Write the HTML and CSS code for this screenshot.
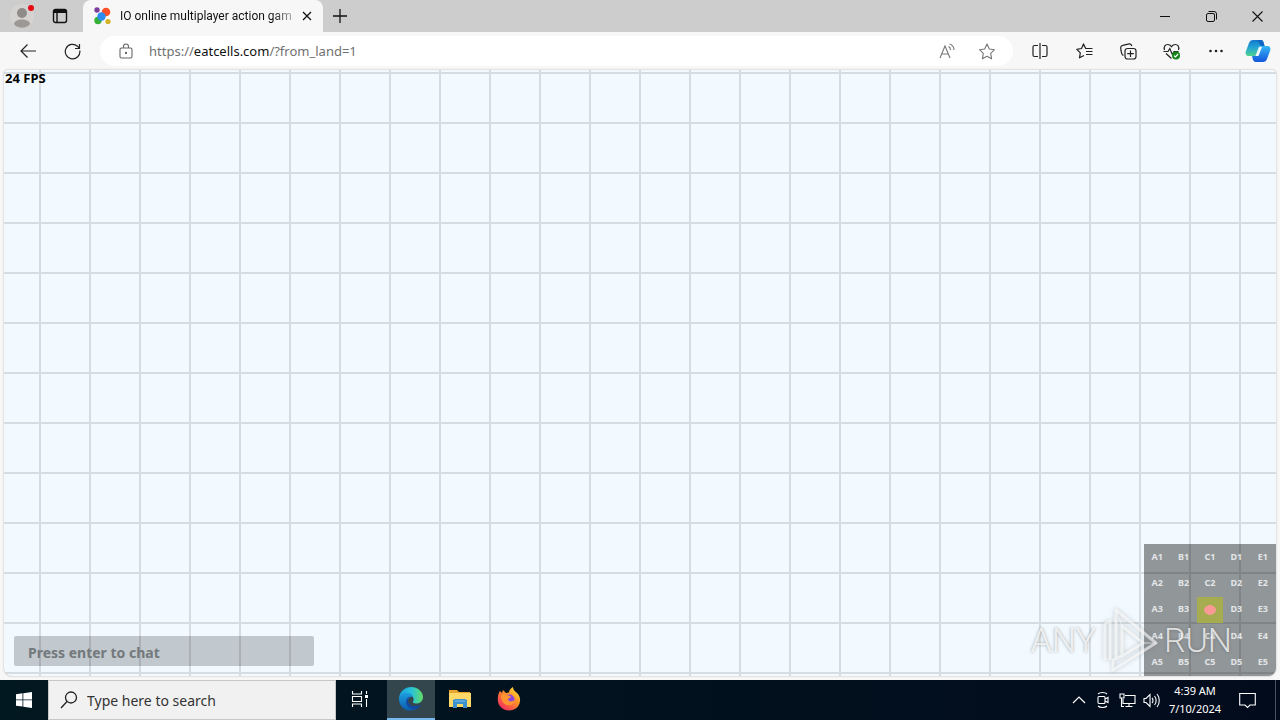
FILE: index.html
```html
<!DOCTYPE html>
<html lang="en">
<head>
<meta charset="utf-8">
<title>IO online multiplayer action game</title>
<link rel="stylesheet" href="styles.css">
</head>
<body>
<header class="tabbar">
  <button class="icon-btn profile" aria-label="Profile"><svg width="28" height="28" viewBox="0 0 28 28"><circle cx="14" cy="14" r="12" fill="#d5d3d2"/><circle cx="14" cy="11" r="5" fill="#8f8b89"/><path d="M6 22c0-6 16-6 16 0-3 5-13 5-16 0z" fill="#9c9896"/><circle cx="23" cy="6" r="3" fill="#e60b12"/></svg></button>
  <button class="icon-btn workspaces" aria-label="Tab actions"><svg width="16" height="16" viewBox="0 0 16 16" fill="none" stroke="#111" stroke-width="1.4"><rect x="1.5" y="1.5" width="13" height="13" rx="2"/><path d="M2 3.500h12" stroke-width="3"/><path d="M5 4v10" stroke-width="1.4"/></svg></button>
  <div class="tab">
    <svg width="18" height="18" viewBox="0 0 18 18"><circle cx="4" cy="3" r="2.7" fill="#7b3f9b"/><circle cx="13" cy="5" r="4.3" fill="#ff4f24"/><circle cx="5" cy="13.5" r="3.7" fill="#35b236"/><circle cx="15" cy="14.5" r="2.6" fill="#d5b327"/><circle cx="8.5" cy="9.5" r="4.2" fill="#2c8cf0"/></svg>
    <span class="tab-title">IO online multiplayer action gam</span>
    <button class="icon-btn" aria-label="Close tab"><svg width="10" height="10" viewBox="0 0 10 10" stroke="#111" stroke-width="1.3"><path d="M1 1l8 8M9 1L1 9"/></svg></button>
  </div>
  <button class="icon-btn new-tab" aria-label="New tab"><svg width="14" height="14" viewBox="0 0 14 14" stroke="#111" stroke-width="1.3"><path d="M7 0v14M0 7h14"/></svg></button>
  <div class="window-controls">
    <button class="icon-btn" aria-label="Minimize"><svg width="10" height="10" viewBox="0 0 10 10" stroke="#111"><path d="M0 5.500h10"/></svg></button>
    <button class="icon-btn" aria-label="Restore"><svg width="11" height="11" viewBox="0 0 11 11" stroke="#111" fill="none"><rect x=".5" y="2.500" width="8" height="8" rx="1.500"/><path d="M2.500.5H8a2.500 2.500 0 0 1 2.500 2.500v5.500"/></svg></button>
    <button class="icon-btn" aria-label="Close"><svg width="11" height="11" viewBox="0 0 11 11" stroke="#111" stroke-width="1.1"><path d="M.5.5l10 10M10.500.5l-10 10"/></svg></button>
  </div>
</header>

<nav class="toolbar">
  <button class="icon-btn nav" aria-label="Back"><svg width="16" height="14" viewBox="0 0 16 14" fill="none" stroke="#222" stroke-width="1.2"><path d="M7.500.5L1 7l6.500 6.500M1 7h15"/></svg></button>
  <button class="icon-btn nav" aria-label="Refresh"><svg width="17" height="17" viewBox="0 0 17 17" fill="none" stroke="#222" stroke-width="1.2"><path d="M15.800 7.500A7.300 7.300 0 1 1 13.500 3.200L15.500 5.500M15.500 1v4.500H11"/></svg></button>
  <div class="address">
    <svg width="14" height="16" viewBox="0 0 14 16" fill="none" stroke="#666" stroke-width="1.1"><rect x="1" y="5" width="12" height="10" rx="1.500"/><path d="M4.500 5V3.500a2.500 2.500 0 0 1 5 0V5"/><circle cx="7" cy="10" r=".6" fill="#666"/></svg>
    <span class="url">https://<b>eatcells.com</b>/?from_land=1</span>
    <button class="icon-btn" aria-label="Read aloud"><svg width="17" height="16" viewBox="0 0 17 16" fill="none" stroke="#777" stroke-width="1.1"><path d="M1 15L6 3l5 12M2.700 11h6.600M9.500 3.500c1.500.8 2 2 2 3.500M10.500 1c3 1 4.500 3.200 4.500 6"/></svg></button>
    <button class="icon-btn" aria-label="Add to favorites"><svg width="18" height="17" viewBox="0 0 18 17" fill="none" stroke="#777" stroke-width="1.1" stroke-linejoin="round"><path d="M9 1l2.300 5 5.200.7-3.800 3.700.9 5.400L9 13.200l-4.600 2.600.9-5.400L1.500 6.700 6.700 6z"/></svg></button>
  </div>
  <div class="tools">
    <button class="icon-btn" aria-label="Split screen"><svg width="16" height="16" viewBox="0 0 16 16" fill="none" stroke="#222" stroke-width="1.2"><path d="M6 2.500H2.500a1.500 1.500 0 0 0-1.500 1.500v8a1.500 1.500 0 0 0 1.500 1.500H6M10 2.500h3.500a1.500 1.500 0 0 1 1.500 1.500v8a1.500 1.500 0 0 1-1.500 1.500H10M8 0v16"/></svg></button>
    <button class="icon-btn" aria-label="Favorites"><svg width="17" height="16" viewBox="0 0 17 16" fill="none" stroke="#222" stroke-width="1.2" stroke-linejoin="round"><path d="M13 5.500H9.700L7.500 1 5.500 5.500.8 6.300l3.500 3.500-.8 5L8 12.500M11 5.500h5.500M10 8.500h6.500M10 11.500h6.500"/></svg></button>
    <button class="icon-btn" aria-label="Collections"><svg width="17" height="17" viewBox="0 0 17 17" fill="none" stroke="#222" stroke-width="1.2"><rect x="5" y="5.500" width="11" height="10.500" rx="2.500"/><path d="M10.500 7.500v6.500M7.200 10.700h6.600M3.500 12.500C1.500 12 1.500 9.500 1 7.500L.7 4.500c0-1.500.8-2 2-2.200l6.500-1.400c1.500-.2 2.300.6 2.600 2.200"/></svg></button>
    <button class="icon-btn" aria-label="Browser essentials"><svg width="18" height="17" viewBox="0 0 18 17" fill="none" stroke="#222" stroke-width="1.2"><path d="M1.500 7C.5 3.500 2.300 1.500 4.700 1.500 6.800 1.500 8 3 8.500 3.700 9 3 10.200 1.500 12.300 1.500c2.400 0 4.200 2 3.200 5.500M.5 8.500H5l1.800-3 2.500 6 1.700-3h4.500M3 10.500l5.500 5"/><circle cx="13" cy="12.500" r="4" fill="#16831b" stroke="none"/><path d="M11 12.600l1.500 1.400 2.600-3" stroke="#fff"/></svg></button>
    <button class="icon-btn" aria-label="Settings and more"><svg width="14" height="4" viewBox="0 0 14 4" fill="#222"><circle cx="1.500" cy="2" r="1.300"/><circle cx="7" cy="2" r="1.300"/><circle cx="12.500" cy="2" r="1.300"/></svg></button>
    <button class="icon-btn" aria-label="Copilot"><svg width="26" height="24" viewBox="0 0 26 24"><defs><linearGradient id="ca" x1="0" y1="0" x2="0" y2="1"><stop offset="0" stop-color="#1478cc"/><stop offset=".45" stop-color="#22a3d6"/><stop offset="1" stop-color="#4ed48f"/></linearGradient><linearGradient id="cb" x1="0" y1="0" x2="0" y2="1"><stop offset="0" stop-color="#35b6f6"/><stop offset="1" stop-color="#1456dc"/></linearGradient></defs><path d="M8 1h8c2 0 2.500 2 3 4l.5 2h-3c-2 0-3 1-3.500 3l-1.500 5c-.5 1.500-1.500 2-3 2H4c-3 0-4-2-3-5L4 4c.8-2 2-3 4-3z" fill="url(#ca)"/><path d="M18 23h-7c-2 0-3-1.500-3.500-4L7 17h2c2 0 3-1 3.500-3L14 9c.5-1.500 1.500-2 3-2h5c3 0 4 2 3 5l-3 8c-.8 2-2 3-4 3z" fill="url(#cb)"/><path d="M11 1h5c2 0 2.500 2 3 4l.5 2h-3c-2-.5-3-6-5.500-6z" fill="#1167c4"/><path d="M14.500 8h2.500l-3.500 9h-3z" fill="#f3f8fa"/></svg></button>
  </div>
</nav>

<main class="game">
  <div class="fps">24 FPS</div>
  <div class="hud">
    <input class="chat" type="text" aria-label="Chat" placeholder="Press enter to chat">
    <div class="minimap">
      <span>A1</span><span>B1</span><span>C1</span><span>D1</span><span>E1</span>
      <span>A2</span><span>B2</span><span>C2</span><span>D2</span><span>E2</span>
      <span>A3</span><span>B3</span><span class="here">C3</span><span>D3</span><span>E3</span>
      <span>A4</span><span>B4</span><span>C4</span><span>D4</span><span>E4</span>
      <span>A5</span><span>B5</span><span>C5</span><span>D5</span><span>E5</span>
    </div>
  </div>
  <div class="watermark"><span>ANY</span><svg width="60" height="68" viewBox="0 0 60 68" fill="none" stroke="#fff" stroke-opacity=".6" stroke-width="3" stroke-linejoin="round"><path d="M5 54V18l5-3v39"/><path d="M16 54V4l40 33-43 27V54l8-4"/><path d="M22 50V20l21 17z"/><path d="M16 4l6 16M56 37H43" stroke-width="1"/></svg><span>RUN</span></div>
</main>

<footer class="taskbar">
  <button class="icon-btn start" aria-label="Start"><svg width="16" height="16" viewBox="0 0 16 16" fill="#fff"><path d="M0 2.200l6.500-.9v6.200H0zM7.300 1.200L16 0v7.500H7.300zM0 8.300h6.500v6.300L0 13.700zM7.300 8.300H16V16l-8.700-1.200z"/></svg></button>
  <label class="search"><svg width="18" height="18" viewBox="0 0 18 18" fill="none" stroke="#222" stroke-width="1.3"><circle cx="11" cy="6.500" r="5.500"/><path d="M7 10.500L1 17"/></svg><input type="text" placeholder="Type here to search" aria-label="Type here to search"></label>
  <button class="icon-btn app" aria-label="Task view"><svg width="18" height="18" viewBox="0 0 18 18" fill="none" stroke="#fff" stroke-width="1.1"><path d="M1.500 1v3h9V1M1.500 17v-3h9v3M1.500 6.500h9v5h-9zM15.500 1v3M15.500 9v8"/><path d="M14 5h3v3h-3z" fill="#fff" stroke="none"/></svg></button>
  <button class="icon-btn app active" aria-label="Microsoft Edge"><svg width="24" height="24" viewBox="0 0 24 24"><defs><linearGradient id="ea" x1="0" x2="1"><stop offset="0" stop-color="#189ee0"/><stop offset=".55" stop-color="#2bc3d5"/><stop offset="1" stop-color="#63dd62"/></linearGradient><linearGradient id="eb" x1="0" x2="0" y1="0" y2="1"><stop offset="0" stop-color="#1c9de1"/><stop offset="1" stop-color="#0c5cac"/></linearGradient></defs><path d="M0 11C1 4 6 0 12 0c7 0 12 5 12 10 0 4-3 6.500-6.500 6.500-3 0-4.500-1.200-3-3C15.500 10 12 7 8.500 7 5 7 2 8 0 11z" fill="url(#ea)"/><path d="M0 12c0-4 4-6 8-6 3.500 0 6 2 6 4-3-1-5 1-5 4 0 4 4 8 9 7.500C9 27 0 21 0 12z" fill="url(#eb)"/><path d="M9 14c0 4 5 6.500 13 4-1 2-2.500 3-4 3.700C13 24 7 20 7 15c0-3 2-5 4-5.500-1.300 1-2 2.500-2 4.500z" fill="#1349a0"/></svg></button>
  <button class="icon-btn app" aria-label="File Explorer"><svg width="22" height="20" viewBox="0 0 22 20"><path d="M0 1h8l2 2h11v15H0z" fill="#e8a52f"/><path d="M0 4h22v14H0z" fill="#ffd968"/><path d="M4 19v-8l2-1h10l2 1v8h-4v-4H8v4z" fill="#3d91cf"/><path d="M6 11h10v2H6z" fill="#5aa9dd"/></svg></button>
  <button class="icon-btn app" aria-label="Firefox"><svg width="24" height="24" viewBox="0 0 24 24"><defs><linearGradient id="fa" x1="1" y1="0" x2=".2" y2="1"><stop offset="0" stop-color="#fff13f"/><stop offset=".45" stop-color="#ff9326"/><stop offset="1" stop-color="#f32763"/></linearGradient></defs><path d="M3 4l2 2 1-3 3 3 3-.5C12 3 14 1 16 0c0 3 2 4 4 6 2 1.500 3.500 5 3 8-.7 6-5 9.500-11 9.500S1 19 .8 13C.7 9 1.500 6 3 4z" fill="url(#fa)"/><circle cx="12.500" cy="12.500" r="5" fill="#8b45df"/><path d="M4 8c3-2 5-1 7 .5 2 .5 3 0 3 1.500l-3 2c0 3 4 3 7 1-1 4-4 6-8 5s-6-5-6-10z" fill="#ff9430"/></svg></button>
  <div class="tray">
    <button class="icon-btn" aria-label="Show hidden icons"><svg width="14" height="8" viewBox="0 0 14 8" fill="none" stroke="#fff" stroke-width="1.2"><path d="M1 7l6-6 6 6"/></svg></button>
    <button class="icon-btn" aria-label="Meet now"><svg width="12" height="18" viewBox="0 0 12 18" fill="none" stroke="#fff" stroke-width="1.1"><rect x="1" y="5.500" width="7" height="7" rx="1"/><path d="M8 8l3-1.500v5L8 10M1 3c2-2 7-2 9 0M1 15c2 2 7 2 9 0"/></svg></button>
    <button class="icon-btn" aria-label="Network"><svg width="17" height="15" viewBox="0 0 17 15" fill="none" stroke="#fff" stroke-width="1.1"><path d="M6 2.500h10v8H4V6M10 10.500v3M6.500 13.500h7M1 1h4v4H1zM2.500 5v8.500H5"/></svg></button>
    <button class="icon-btn" aria-label="Volume"><svg width="17" height="15" viewBox="0 0 17 15" fill="none" stroke="#fff" stroke-width="1.1"><path d="M1 5.500h2l4-4v12l-4-4H1zM9 5c1.300 1.300 1.300 4 0 5M11.500 3c2.200 2.500 2.200 6.500 0 9M14 1c3 3.500 3 9.500 0 13"/></svg></button>
    <time class="clock"><span>4:39 AM</span><span>7/10/2024</span></time>
    <button class="icon-btn" aria-label="Notifications"><svg width="17" height="17" viewBox="0 0 17 17" fill="none" stroke="#fff" stroke-width="1.1"><path d="M.7 1.500h15.600v11.500H11l-2.500 2.500L6 13H.7z"/></svg></button>
  </div>
</footer>
</body>
</html>
```
FILE: styles.css
```css
* { box-sizing: border-box; }
body {
  margin: 0;
  min-height: 100vh;
  display: flex;
  flex-direction: column;
  background: #f7f7f7;
  color: #111;
  font-family: "Noto Sans", "Open Sans", sans-serif;
}
svg { display: block; flex: none; }
.icon-btn {
  display: flex;
  align-items: center;
  justify-content: center;
  flex: none;
  padding: 0;
  border: 0;
  background: none;
}
.tabbar { display: flex; height: 32px; background: #cdcdcd; }
.profile { width: 44px; }
.workspaces { width: 32px; }
.tab {
  display: flex;
  align-items: center;
  width: 240px;
  margin-left: 7px;
  padding: 0 11px 0 10px;
  gap: 9px;
  background: #f7f7f7;
  border-radius: 8px 8px 0 0;
}
.tab-title {
  flex: 1;
  overflow: hidden;
  white-space: nowrap;
  font-family: Roboto, "Noto Sans", sans-serif;
  font-size: 12px;
  mask-image: linear-gradient(to right, #000 88%, rgba(0, 0, 0, .3));
}
.new-tab { width: 34px; }
.window-controls { display: flex; margin-left: auto; }
.window-controls .icon-btn { width: 46px; }

.toolbar { display: flex; align-items: center; height: 38px; padding: 0 11px 0 6px; }
.nav { width: 44px; height: 32px; }
.address {
  display: flex;
  align-items: center;
  flex: 1;
  height: 30px;
  margin-left: 6px;
  padding: 0 17px 0 19px;
  border-radius: 15px;
  background: #fff;
}
.url { flex: 1; margin-left: 16px; font-size: 13px; color: #707070; }
.url b { font-weight: 400; color: #111; }
.address .icon-btn { margin-left: 22px; }
.tools { display: flex; align-items: center; margin-left: 5px; }
.tools .icon-btn { width: 44px; height: 32px; }
.tools .icon-btn:last-child { width: 40px; margin-right: -9px; }

.game {
  position: relative;
  flex: 1;
  display: flex;
  flex-direction: column;
  justify-content: space-between;
  margin: 0 4px 4px;
  overflow: hidden;
  border-radius: 4px 4px 8px 8px;
  box-shadow: 0 0 2px #aaa;
  background-color: #f2faff;
  background-image:
    linear-gradient(to right, #d5dde2 2px, transparent 2px),
    linear-gradient(to bottom, #d5dde2 2px, transparent 2px);
  background-size: 50px 50px;
  background-position: 35px 2px;
}
.fps { padding-left: 1px; font-size: 13px; line-height: 16px; font-weight: 700; color: #000; }
.hud { display: flex; align-items: flex-end; justify-content: space-between; }
.chat {
  width: 300px;
  height: 30px;
  margin: 0 0 10px 10px;
  padding: 2px 14px 0;
  border: 0;
  border-radius: 2px;
  background: rgba(0, 0, 10, .2);
  font: 700 14px "Noto Sans", sans-serif;
}
.chat::placeholder { color: #74797c; opacity: 1; }
.minimap {
  display: grid;
  grid-template-columns: repeat(5, 1fr);
  grid-template-rows: repeat(5, 1fr);
  width: 132px;
  height: 132px;
  background: rgba(0, 0, 0, .4);
  color: #e2e5e7;
  font-size: 9px;
  font-weight: 700;
}
.minimap span { display: flex; align-items: center; justify-content: center; padding-bottom: 2px; }
.minimap .here {
  padding: 0;
  background: radial-gradient(ellipse 6px 5px at center, #f99b94 92%, transparent), #a6ad50;
  color: #f99b94;
}
.watermark {
  position: absolute;
  right: 44px;
  bottom: 2px;
  display: flex;
  align-items: center;
  gap: 4px;
  font: 300 34px Roboto, sans-serif;
  color: rgba(255, 255, 255, .75);
  text-shadow: 0 0 3px rgba(70, 70, 70, .5);
  pointer-events: none;
}
.watermark svg { filter: drop-shadow(0 0 2px rgba(90, 90, 90, .5)); }

.taskbar { display: flex; height: 40px; background: linear-gradient(to right, #021820, #020b1c); color: #fff; }
.start { width: 48px; }
.search {
  display: flex;
  align-items: center;
  width: 288px;
  padding: 0 11px;
  gap: 9px;
  border: 1px solid #c6c6c6;
  background: #f1f1f1;
}
.search input {
  flex: 1;
  min-width: 0;
  padding: 0;
  border: 0;
  background: none;
  font: 14px "Noto Sans", sans-serif;
}
.search input::placeholder { color: #333; opacity: 1; }
.app { width: 49px; border-bottom: 2px solid transparent; }
.search + .app { width: 48px; margin-right: 3px; }
.app.active { width: 48px; background: #33464d; border-color: #76b9ed; }
.tray { display: flex; align-items: center; margin-left: auto; padding-right: 20px; border-right: 1px solid #47505c; margin-right: 4px; }
.tray .icon-btn { width: 24px; height: 40px; }
.clock {
  display: flex;
  flex-direction: column;
  align-items: center;
  width: 64px;
  font-size: 11px;
  line-height: 18px;
}
.tray .clock + .icon-btn { width: 40px; margin-right: -12px; }
```
